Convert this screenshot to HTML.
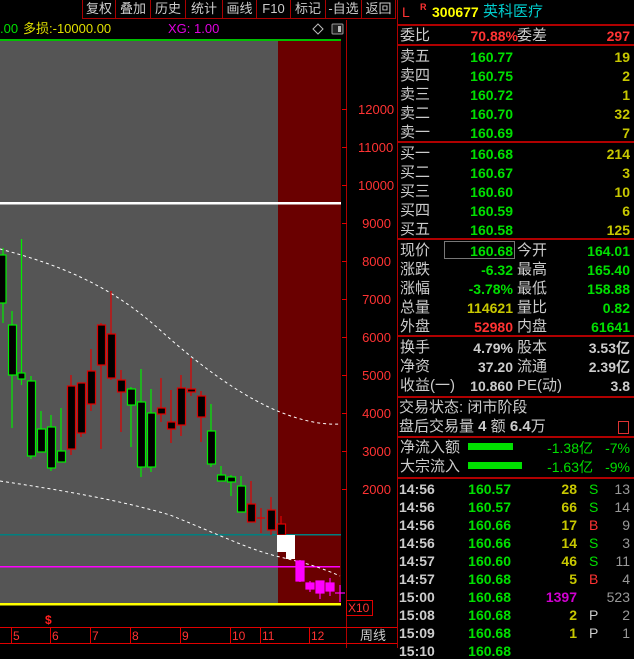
<!DOCTYPE html>
<html><head><meta charset="utf-8"><style>
*{margin:0;padding:0;box-sizing:border-box}
body{width:634px;height:648px;background:#000;overflow:hidden;position:relative;font-family:"Liberation Sans","Noto Sans CJK SC",sans-serif;}
.a{position:absolute;white-space:nowrap;line-height:1}
.tb{position:absolute;top:0;height:19px;border-left:1px solid #a00;border-bottom:1px solid #a00;color:#ccc;font-size:13px;text-align:center;line-height:18px}
.l{position:absolute;left:400px;color:#ccc;font-size:15px;line-height:1}
.g{color:#00e000;font-weight:bold}
.y{color:#c8c800;font-weight:bold}
.r{color:#ff3333;font-weight:bold}
.w{color:#ccc;font-weight:bold}
.rt{position:absolute;font-size:14px;line-height:1;text-align:right}
.hl{position:absolute;left:397px;width:237px;height:2px;background:#b00000}
</style></head><body>
<div class="tb" style="left:82px;width:33px">复权</div>
<div class="tb" style="left:115px;width:35px">叠加</div>
<div class="tb" style="left:150px;width:35px">历史</div>
<div class="tb" style="left:185px;width:37px">统计</div>
<div class="tb" style="left:222px;width:34px">画线</div>
<div class="tb" style="left:256px;width:34px">F10</div>
<div class="tb" style="left:290px;width:35px">标记</div>
<div class="tb" style="left:325px;width:36px">-自选</div>
<div class="tb" style="left:361px;width:35px;border-right:1px solid #a00">返回</div>
<div class="a" style="left:0;top:22px;font-size:13px;color:#00e000">.00</div>
<div class="a" style="left:23px;top:22px;font-size:13px;color:#e0e000">多损:-10000.00</div>
<div class="a" style="left:168px;top:22px;font-size:13px;color:#e000e0">XG: 1.00</div>
<svg width="634" height="648" style="position:absolute;left:0;top:0">
<rect x="0" y="41" width="278" height="562" fill="#555"/>
<rect x="278" y="41" width="63" height="562" fill="#6a0000"/>
<line x1="0" y1="40" x2="341" y2="40" stroke="#00ff00" stroke-width="1.5"/>
<path d="M318 24l5 5-5 5-5-5z" fill="none" stroke="#bbb"/>
<rect x="332" y="24" width="11" height="10" rx="1" fill="#222" stroke="#999"/><rect x="338" y="26" width="3" height="6" fill="#bbb"/>
<line x1="346.5" y1="20" x2="346.5" y2="648" stroke="#b00000"/>
<line x1="397.5" y1="0" x2="397.5" y2="648" stroke="#b00000"/>
<line x1="0" y1="19.5" x2="82" y2="19.5" stroke="#000"/>
<rect x="0" y="202" width="341" height="2.5" fill="#fff"/>
<rect x="0" y="534" width="341" height="1.5" fill="#008080"/>
<rect x="0" y="566" width="340" height="1.5" fill="#ff00ff"/>
<rect x="0" y="603" width="341" height="2.5" fill="#ffff00"/>
<path d="M0 249 C60 265 110 285 160 330 C210 375 250 400 280 412 C300 420 320 425 340 424" fill="none" stroke="#fff" stroke-dasharray="3,3" stroke-width="1"/>
<path d="M0 481 C60 490 120 500 170 515 C220 535 250 550 280 557 C300 562 315 565 340 576" fill="none" stroke="#fff" stroke-dasharray="3,3" stroke-width="1"/>
<g stroke-width="1.2" fill="#000">
<g stroke="#00ee00">
<line x1="3" y1="248" x2="3" y2="323"/><rect x="-2" y="255" width="8" height="48"/>
<line x1="12" y1="311" x2="12" y2="428"/><rect x="8.5" y="325" width="8" height="50"/>
<line x1="21.5" y1="239" x2="21.5" y2="385"/><rect x="18" y="373" width="7" height="6"/>
<line x1="31" y1="376" x2="31" y2="459"/><rect x="27.5" y="381" width="8" height="75"/>
<line x1="41" y1="411" x2="41" y2="452"/><rect x="37.5" y="429" width="8" height="23"/>
<line x1="51" y1="415" x2="51" y2="471"/><rect x="47.5" y="427" width="8" height="41"/>
<line x1="61" y1="408" x2="61" y2="462"/><rect x="57.5" y="451" width="8" height="11"/>
<line x1="131" y1="387" x2="131" y2="447"/><rect x="127.5" y="389" width="8" height="16"/>
<line x1="141" y1="369" x2="141" y2="477"/><rect x="137.5" y="402" width="8" height="65"/>
<line x1="151" y1="389" x2="151" y2="472"/><rect x="147.5" y="413" width="8" height="54"/>
<line x1="211" y1="404" x2="211" y2="467"/><rect x="207.5" y="431" width="8" height="33"/>
<line x1="221" y1="466" x2="221" y2="481"/><rect x="217.5" y="475" width="8" height="6"/>
<line x1="231" y1="475" x2="231" y2="496"/><rect x="227.5" y="477" width="8" height="5"/>
<line x1="241" y1="476" x2="241" y2="512"/><rect x="237.5" y="486" width="8" height="26"/>
</g>
<g stroke="#e00000">
<line x1="71" y1="375" x2="71" y2="455"/><rect x="67.5" y="386" width="8" height="63"/>
<line x1="81" y1="383" x2="81" y2="437"/><rect x="77.5" y="383" width="8" height="50"/>
<line x1="91" y1="349" x2="91" y2="411"/><rect x="87.5" y="371" width="8" height="33"/>
<line x1="101" y1="323" x2="101" y2="449"/><rect x="97.5" y="325" width="8" height="40"/>
<line x1="111" y1="291" x2="111" y2="380"/><rect x="107.5" y="334" width="8" height="44"/>
<line x1="121" y1="370" x2="121" y2="432"/><rect x="117.5" y="380" width="8" height="12"/>
<line x1="161" y1="378" x2="161" y2="422"/><rect x="157.5" y="408" width="8" height="6"/>
<line x1="171" y1="390" x2="171" y2="443"/><rect x="167.5" y="422" width="8" height="7"/>
<line x1="181" y1="375" x2="181" y2="436"/><rect x="177.5" y="388" width="8" height="37"/>
<line x1="191" y1="358" x2="191" y2="396"/><rect x="187.5" y="389" width="8" height="3"/>
<line x1="201" y1="391" x2="201" y2="442"/><rect x="197.5" y="396" width="8" height="21"/>
<line x1="251" y1="481" x2="251" y2="522"/><rect x="247.5" y="504" width="8" height="18"/>
<line x1="261" y1="508" x2="261" y2="533"/><line x1="257" y1="518" x2="265" y2="518"/>
<line x1="271" y1="497" x2="271" y2="535"/><rect x="267.5" y="510" width="8" height="20"/>
<line x1="281" y1="516" x2="281" y2="535"/><rect x="277.5" y="524" width="8" height="11"/>
</g>
</g>
<rect x="277" y="535" width="18" height="17" fill="#fff"/><rect x="286" y="550" width="9" height="9" fill="#fff"/>
<g stroke="#ff00ff" stroke-width="1.2" fill="#ff00ff">
<line x1="300" y1="560" x2="300" y2="582"/><rect x="296" y="561" width="8" height="20"/>
<line x1="310" y1="581" x2="310" y2="592"/><rect x="306" y="583" width="8" height="6"/>
<line x1="320" y1="581" x2="320" y2="599"/><rect x="316" y="581" width="8" height="12"/>
<line x1="330" y1="578" x2="330" y2="596"/><rect x="326" y="583" width="8" height="8"/>
<line x1="340" y1="585" x2="340" y2="602"/><line x1="335" y1="593" x2="345" y2="593"/>
</g>
<g stroke="#e00000">
<line x1="342" y1="109.5" x2="347" y2="109.5"/><line x1="342" y1="147.5" x2="347" y2="147.5"/><line x1="342" y1="185.5" x2="347" y2="185.5"/><line x1="342" y1="223.5" x2="347" y2="223.5"/><line x1="342" y1="261.5" x2="347" y2="261.5"/><line x1="342" y1="299.5" x2="347" y2="299.5"/><line x1="342" y1="337.5" x2="347" y2="337.5"/><line x1="342" y1="375.5" x2="347" y2="375.5"/><line x1="342" y1="413.5" x2="347" y2="413.5"/><line x1="342" y1="451.5" x2="347" y2="451.5"/><line x1="342" y1="489.5" x2="347" y2="489.5"/>
<line x1="0" y1="627.5" x2="397" y2="627.5"/><line x1="0" y1="643.5" x2="397" y2="643.5"/>
<line x1="11.5" y1="627" x2="11.5" y2="643"/><line x1="50.5" y1="627" x2="50.5" y2="643"/><line x1="90.5" y1="627" x2="90.5" y2="643"/><line x1="130.5" y1="627" x2="130.5" y2="643"/><line x1="180.5" y1="627" x2="180.5" y2="643"/><line x1="230.5" y1="627" x2="230.5" y2="643"/><line x1="260.5" y1="627" x2="260.5" y2="643"/><line x1="309.5" y1="627" x2="309.5" y2="643"/>
<rect x="346.5" y="600.5" width="26" height="15" fill="none"/>
</g>
</svg>
<div class="a" style="left:358px;top:103px;font-size:13px;color:#ff3333;width:33px;text-align:right">12000</div>
<div class="a" style="left:358px;top:141px;font-size:13px;color:#ff3333;width:33px;text-align:right">11000</div>
<div class="a" style="left:358px;top:179px;font-size:13px;color:#ff3333;width:33px;text-align:right">10000</div>
<div class="a" style="left:358px;top:217px;font-size:13px;color:#ff3333;width:33px;text-align:right">9000</div>
<div class="a" style="left:358px;top:255px;font-size:13px;color:#ff3333;width:33px;text-align:right">8000</div>
<div class="a" style="left:358px;top:293px;font-size:13px;color:#ff3333;width:33px;text-align:right">7000</div>
<div class="a" style="left:358px;top:331px;font-size:13px;color:#ff3333;width:33px;text-align:right">6000</div>
<div class="a" style="left:358px;top:369px;font-size:13px;color:#ff3333;width:33px;text-align:right">5000</div>
<div class="a" style="left:358px;top:407px;font-size:13px;color:#ff3333;width:33px;text-align:right">4000</div>
<div class="a" style="left:358px;top:445px;font-size:13px;color:#ff3333;width:33px;text-align:right">3000</div>
<div class="a" style="left:358px;top:483px;font-size:13px;color:#ff3333;width:33px;text-align:right">2000</div>
<div class="a" style="left:348px;top:602px;font-size:12px;color:#ff3333">X10</div>
<div class="a" style="left:45px;top:614px;font-size:12px;color:#ff2020;font-weight:bold">$</div>
<div class="a" style="top:630px;font-size:12px;color:#ff3333;left:13px">5</div>
<div class="a" style="top:630px;font-size:12px;color:#ff3333;left:52px">6</div>
<div class="a" style="top:630px;font-size:12px;color:#ff3333;left:92px">7</div>
<div class="a" style="top:630px;font-size:12px;color:#ff3333;left:132px">8</div>
<div class="a" style="top:630px;font-size:12px;color:#ff3333;left:182px">9</div>
<div class="a" style="top:630px;font-size:12px;color:#ff3333;left:232px">10</div>
<div class="a" style="top:630px;font-size:12px;color:#ff3333;left:262px">11</div>
<div class="a" style="top:630px;font-size:12px;color:#ff3333;left:311px">12</div>
<div class="a" style="top:629px;font-size:13px;color:#ccc;left:360px">周线</div>

<!-- right panel -->
<div class="a" style="left:402px;top:5px;font-size:14px;color:#ff3333">L</div>
<div class="a" style="left:420px;top:3px;font-size:9px;color:#ff3333;font-weight:bold">R</div>
<div class="a" style="left:432px;top:5px;font-size:14px;color:#ffff00;font-weight:bold">300677</div>
<div class="a" style="left:483px;top:4px;font-size:15px;color:#00cccc">英科医疗</div>
<div class="hl" style="top:24px"></div>
<div class="l" style="top:28px">委比</div><div class="rt r" style="left:440px;width:78px;top:29px">70.88%</div><div class="l" style="left:517px;top:28px">委差</div><div class="rt r" style="left:560px;width:70px;top:29px">297</div>
<div class="hl" style="top:44px"></div>
<div class="l" style="top:49px">卖五</div><div class="rt g" style="left:440px;width:73px;top:50px">160.77</div><div class="rt y" style="left:560px;width:70px;top:50px">19</div>
<div class="l" style="top:68px">卖四</div><div class="rt g" style="left:440px;width:73px;top:69px">160.75</div><div class="rt y" style="left:560px;width:70px;top:69px">2</div>
<div class="l" style="top:87px">卖三</div><div class="rt g" style="left:440px;width:73px;top:88px">160.72</div><div class="rt y" style="left:560px;width:70px;top:88px">1</div>
<div class="l" style="top:106px">卖二</div><div class="rt g" style="left:440px;width:73px;top:107px">160.70</div><div class="rt y" style="left:560px;width:70px;top:107px">32</div>
<div class="l" style="top:125px">卖一</div><div class="rt g" style="left:440px;width:73px;top:126px">160.69</div><div class="rt y" style="left:560px;width:70px;top:126px">7</div>
<div class="hl" style="top:141px"></div>
<div class="l" style="top:146px">买一</div><div class="rt g" style="left:440px;width:73px;top:147px">160.68</div><div class="rt y" style="left:560px;width:70px;top:147px">214</div>
<div class="l" style="top:165px">买二</div><div class="rt g" style="left:440px;width:73px;top:166px">160.67</div><div class="rt y" style="left:560px;width:70px;top:166px">3</div>
<div class="l" style="top:184px">买三</div><div class="rt g" style="left:440px;width:73px;top:185px">160.60</div><div class="rt y" style="left:560px;width:70px;top:185px">10</div>
<div class="l" style="top:203px">买四</div><div class="rt g" style="left:440px;width:73px;top:204px">160.59</div><div class="rt y" style="left:560px;width:70px;top:204px">6</div>
<div class="l" style="top:222px">买五</div><div class="rt g" style="left:440px;width:73px;top:223px">160.58</div><div class="rt y" style="left:560px;width:70px;top:223px">125</div>
<div class="hl" style="top:238px"></div>
<div style="position:absolute;left:444px;top:241px;width:71px;height:18px;border:1px solid #777"></div>
<div class="l" style="top:243px">现价</div><div class="rt g" style="left:440px;width:73px;top:244px">160.68</div><div class="l" style="left:517px;top:243px">今开</div><div class="rt g" style="left:560px;width:70px;top:244px">164.01</div>
<div class="l" style="top:262px">涨跌</div><div class="rt g" style="left:440px;width:73px;top:263px">-6.32</div><div class="l" style="left:517px;top:262px">最高</div><div class="rt g" style="left:560px;width:70px;top:263px">165.40</div>
<div class="l" style="top:281px">涨幅</div><div class="rt g" style="left:440px;width:73px;top:282px">-3.78%</div><div class="l" style="left:517px;top:281px">最低</div><div class="rt g" style="left:560px;width:70px;top:282px">158.88</div>
<div class="l" style="top:300px">总量</div><div class="rt y" style="left:440px;width:73px;top:301px">114621</div><div class="l" style="left:517px;top:300px">量比</div><div class="rt g" style="left:560px;width:70px;top:301px">0.82</div>
<div class="l" style="top:319px">外盘</div><div class="rt r" style="left:440px;width:73px;top:320px">52980</div><div class="l" style="left:517px;top:319px">内盘</div><div class="rt g" style="left:560px;width:70px;top:320px">61641</div>
<div class="hl" style="top:335px"></div>
<div class="l" style="top:340px">换手</div><div class="rt w" style="left:440px;width:73px;top:341px">4.79%</div><div class="l" style="left:517px;top:340px">股本</div><div class="rt w" style="left:560px;width:70px;top:341px">3.53亿</div>
<div class="l" style="top:359px">净资</div><div class="rt w" style="left:440px;width:73px;top:360px">37.20</div><div class="l" style="left:517px;top:359px">流通</div><div class="rt w" style="left:560px;width:70px;top:360px">2.39亿</div>
<div class="l" style="top:378px">收益(一)</div><div class="rt w" style="left:440px;width:73px;top:379px">10.860</div><div class="l" style="left:517px;top:378px">PE(动)</div><div class="rt w" style="left:560px;width:70px;top:379px">3.8</div>
<div class="hl" style="top:396px"></div>
<div class="l" style="top:400px;left:399px">交易状态: 闭市阶段</div>
<div class="l" style="top:419px;left:399px">盘后交易量 <b>4</b> 额 <b>6.4</b>万</div>
<div style="position:absolute;left:618px;top:421px;width:11px;height:13px;border:1px solid #d33"></div>
<div class="hl" style="top:436px"></div>
<div class="l" style="top:440px">净流入额</div><div style="position:absolute;left:468px;top:443px;width:45px;height:7px;background:#00e000"></div><div class="rt g" style="left:520px;width:73px;top:441px;font-weight:normal">-1.38亿</div><div class="rt g" style="left:590px;width:40px;top:441px;font-weight:normal">-7%</div>
<div class="l" style="top:459px">大宗流入</div><div style="position:absolute;left:468px;top:462px;width:54px;height:7px;background:#00e000"></div><div class="rt g" style="left:520px;width:73px;top:460px;font-weight:normal">-1.63亿</div><div class="rt g" style="left:590px;width:40px;top:460px;font-weight:normal">-9%</div>
<div class="hl" style="top:477px"></div>

<div class="rt w" style="left:399px;top:482px;text-align:left">14:56</div><div class="rt g" style="left:440px;width:71px;top:482px">160.57</div><div class="rt y" style="left:540px;width:37px;top:482px">28</div><div class="rt g" style="left:589px;top:482px;font-weight:normal">S</div><div class="rt" style="left:600px;width:30px;top:482px;color:#999">13</div>
<div class="rt w" style="left:399px;top:500px;text-align:left">14:56</div><div class="rt g" style="left:440px;width:71px;top:500px">160.57</div><div class="rt y" style="left:540px;width:37px;top:500px">66</div><div class="rt g" style="left:589px;top:500px;font-weight:normal">S</div><div class="rt" style="left:600px;width:30px;top:500px;color:#999">14</div>
<div class="rt w" style="left:399px;top:518px;text-align:left">14:56</div><div class="rt g" style="left:440px;width:71px;top:518px">160.66</div><div class="rt y" style="left:540px;width:37px;top:518px">17</div><div class="rt" style="left:589px;top:518px;color:#ff3333">B</div><div class="rt" style="left:600px;width:30px;top:518px;color:#999">9</div>
<div class="rt w" style="left:399px;top:536px;text-align:left">14:56</div><div class="rt g" style="left:440px;width:71px;top:536px">160.66</div><div class="rt y" style="left:540px;width:37px;top:536px">14</div><div class="rt g" style="left:589px;top:536px;font-weight:normal">S</div><div class="rt" style="left:600px;width:30px;top:536px;color:#999">3</div>
<div class="rt w" style="left:399px;top:554px;text-align:left">14:57</div><div class="rt g" style="left:440px;width:71px;top:554px">160.60</div><div class="rt y" style="left:540px;width:37px;top:554px">46</div><div class="rt g" style="left:589px;top:554px;font-weight:normal">S</div><div class="rt" style="left:600px;width:30px;top:554px;color:#999">11</div>
<div class="rt w" style="left:399px;top:572px;text-align:left">14:57</div><div class="rt g" style="left:440px;width:71px;top:572px">160.68</div><div class="rt y" style="left:540px;width:37px;top:572px">5</div><div class="rt" style="left:589px;top:572px;color:#ff3333">B</div><div class="rt" style="left:600px;width:30px;top:572px;color:#999">4</div>
<div class="rt w" style="left:399px;top:590px;text-align:left">15:00</div><div class="rt g" style="left:440px;width:71px;top:590px">160.68</div><div class="rt" style="left:530px;width:47px;top:590px;color:#d000d0;font-weight:bold">1397</div><div class="rt" style="left:600px;width:30px;top:590px;color:#999">523</div>
<div class="rt w" style="left:399px;top:608px;text-align:left">15:08</div><div class="rt g" style="left:440px;width:71px;top:608px">160.68</div><div class="rt y" style="left:540px;width:37px;top:608px">2</div><div class="rt" style="left:589px;top:608px;color:#ccc">P</div><div class="rt" style="left:600px;width:30px;top:608px;color:#999">2</div>
<div class="rt w" style="left:399px;top:626px;text-align:left">15:09</div><div class="rt g" style="left:440px;width:71px;top:626px">160.68</div><div class="rt y" style="left:540px;width:37px;top:626px">1</div><div class="rt" style="left:589px;top:626px;color:#ccc">P</div><div class="rt" style="left:600px;width:30px;top:626px;color:#999">1</div>
<div class="rt w" style="left:399px;top:644px;text-align:left">15:10</div><div class="rt g" style="left:440px;width:71px;top:644px">160.68</div>
</body></html>
